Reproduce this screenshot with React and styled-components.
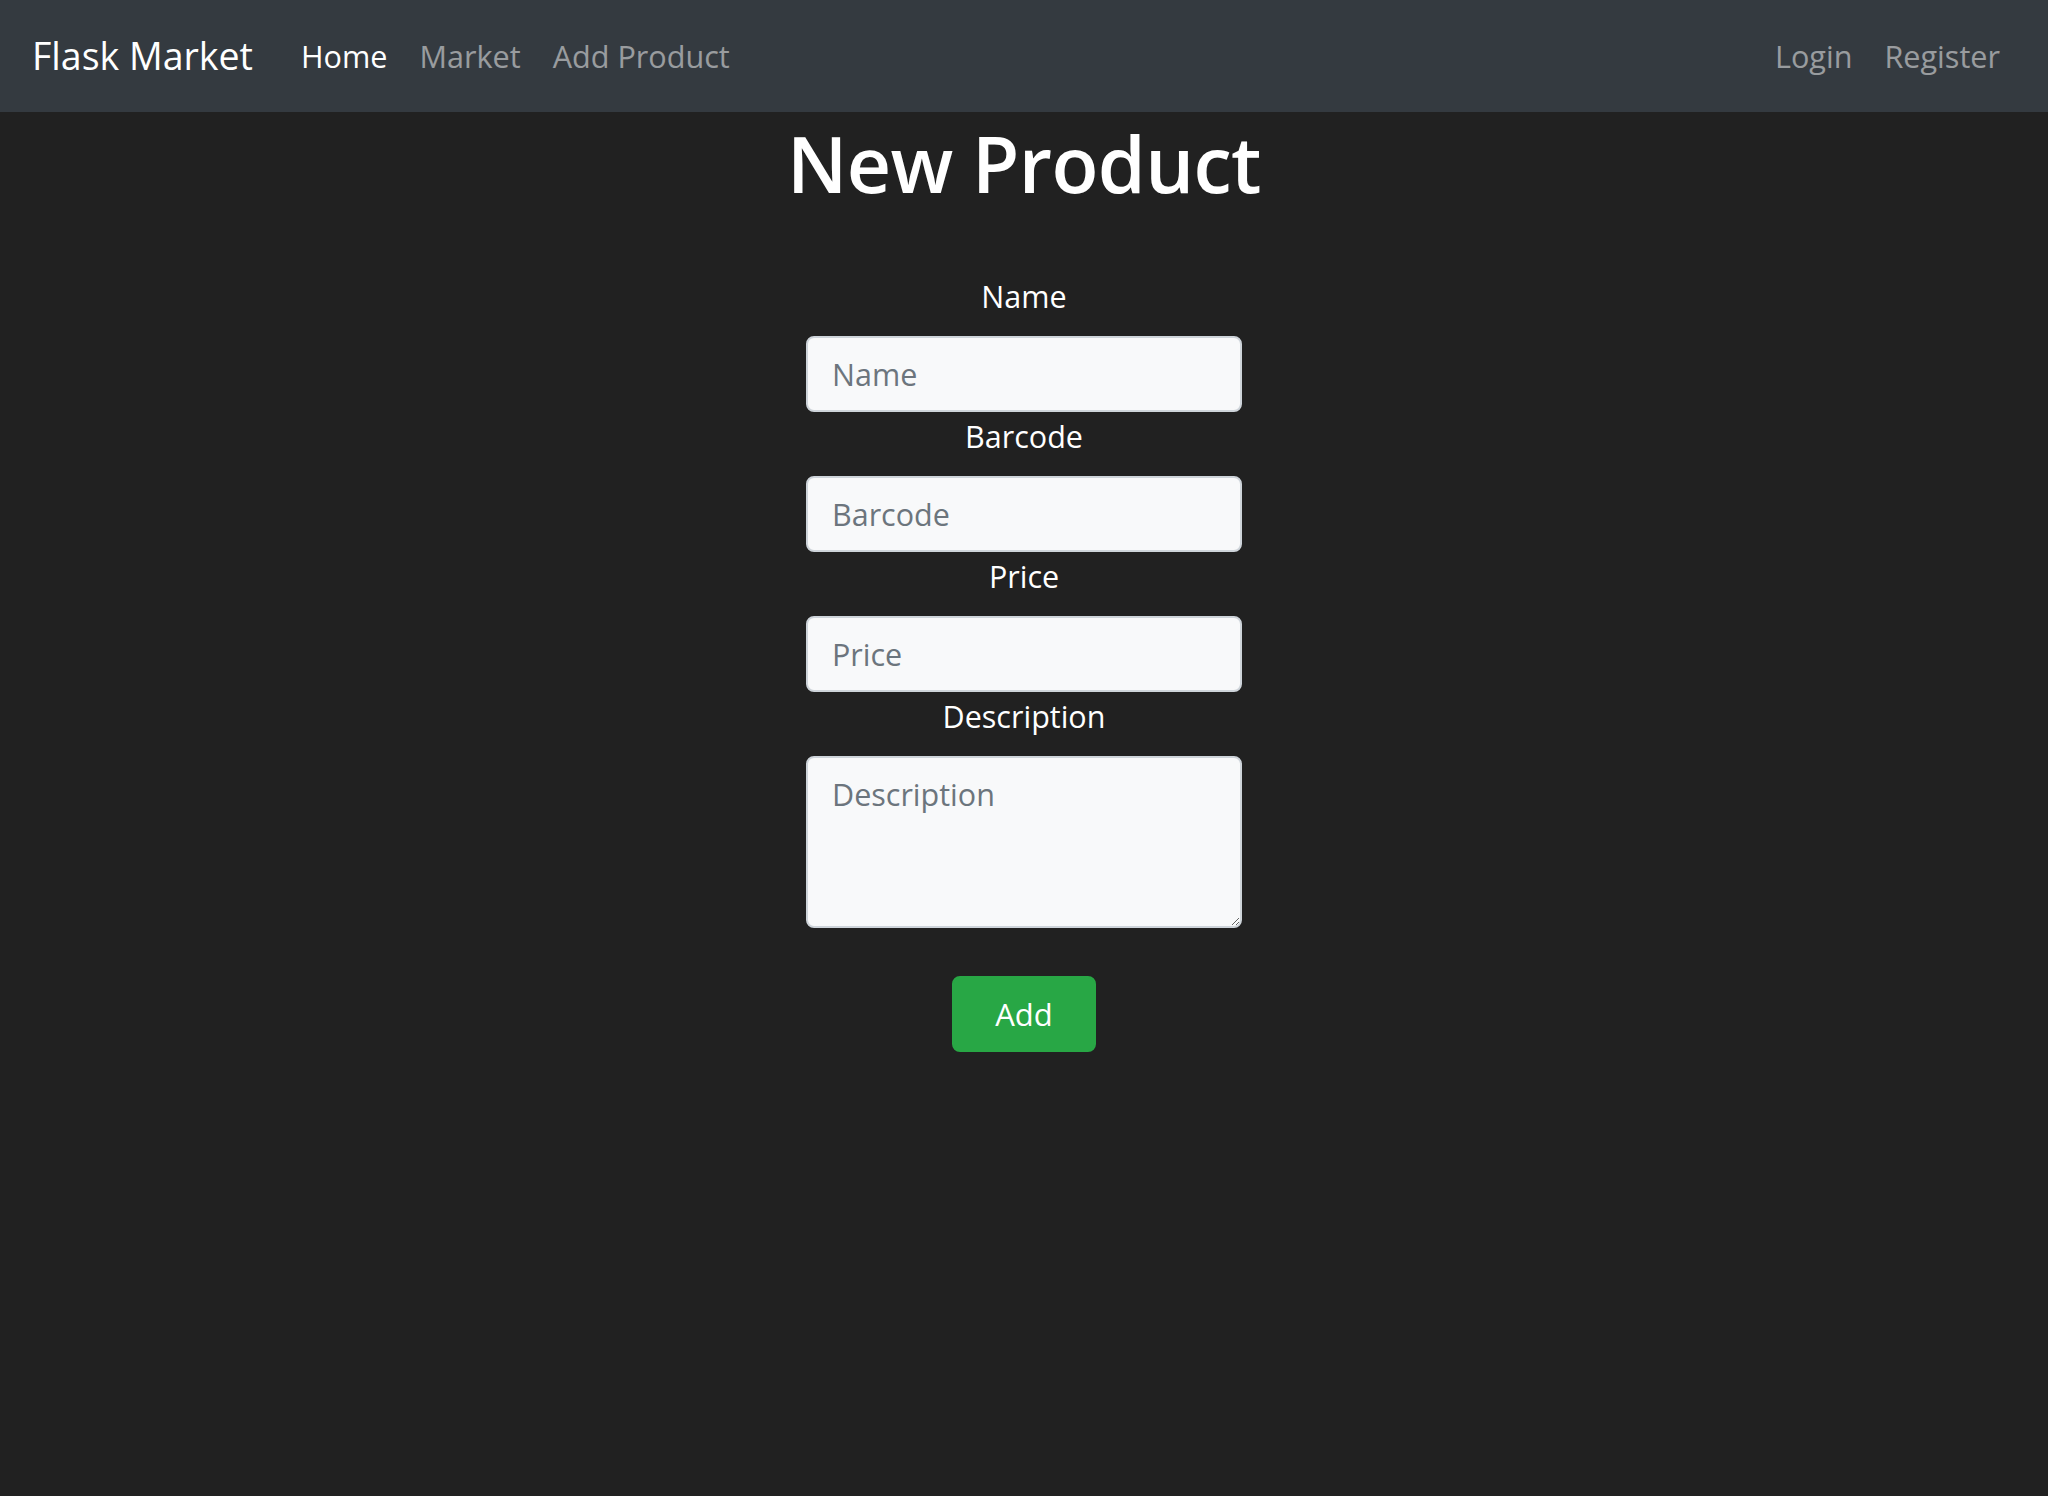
import React from 'react'
import styled, { createGlobalStyle } from 'styled-components'

const GlobalStyle = createGlobalStyle`
  * { box-sizing: border-box; }
  html, body {
    margin: 0;
    background: #212121;
    color: #fff;
    font-family: 'Open Sans', 'Noto Sans', sans-serif;
    font-size: 32px;
    line-height: 1.5;
  }
`

const Navbar = styled.nav`
  display: flex;
  align-items: center;
  background-color: #343a40;
  padding: 16px 32px;
`

const Brand = styled.a`
  color: #fff;
  font-size: 37.5px;
  line-height: 60px;
  padding: 10px 0;
  margin-right: 32px;
  text-decoration: none;
  white-space: nowrap;
`

const NavList = styled.ul`
  display: flex;
  list-style: none;
  margin: 0;
  padding: 0;
  margin-left: ${(p) => (p.$right ? 'auto' : '0')};
`

const NavLink = styled.a`
  display: block;
  padding: 16px 16px;
  font-size: 30.6px;
  line-height: 48px;
  color: ${(p) => (p.$active ? '#fff' : 'rgba(255, 255, 255, 0.5)')};
  text-decoration: none;
`

const Main = styled.main`
  display: flex;
  flex-direction: column;
  align-items: center;
`

const Title = styled.h1`
  margin: 4px 0 60px;
  font-size: 77px;
  font-weight: 600;
  line-height: 96px;
  letter-spacing: -0.6px;
`

const Form = styled.form`
  width: 436px;
  display: flex;
  flex-direction: column;
  align-items: center;
`

const Label = styled.label`
  font-size: 30.5px;
  line-height: 48px;
  margin-bottom: 16px;
`

const fieldStyles = `
  display: block;
  width: 100%;
  padding: 12px 24px;
  font-family: 'Open Sans', 'Noto Sans', sans-serif;
  font-size: 30.5px;
  line-height: 48px;
  color: #495057;
  background-color: #f8f9fa;
  border: 2px solid #ced4da;
  border-radius: 8px;
  outline: none;
  &::placeholder { color: #6c757d; }
`

const Input = styled.input`
  ${fieldStyles}
  height: 76px;
`

const TextArea = styled.textarea`
  ${fieldStyles}
  height: 172px;
  margin-bottom: 48px;
`

const SubmitButton = styled.button`
  font-family: 'Open Sans', 'Noto Sans', sans-serif;
  font-size: 31px;
  line-height: 48px;
  padding: 12px 24px;
  width: 144px;
  color: #fff;
  background-color: #28a745;
  border: 2px solid #28a745;
  border-radius: 8px;
  cursor: pointer;
`

const App = () => (
  <>
    <GlobalStyle />
    <Navbar>
      <Brand href="#">Flask Market</Brand>
      <NavList>
        <li><NavLink href="#" $active>Home</NavLink></li>
        <li><NavLink href="#">Market</NavLink></li>
        <li><NavLink href="#">Add Product</NavLink></li>
      </NavList>
      <NavList $right>
        <li><NavLink href="#">Login</NavLink></li>
        <li><NavLink href="#">Register</NavLink></li>
      </NavList>
    </Navbar>
    <Main>
      <Title>New Product</Title>
      <Form onSubmit={(e) => e.preventDefault()}>
        <Label htmlFor="name">Name</Label>
        <Input id="name" placeholder="Name" />
        <Label htmlFor="barcode">Barcode</Label>
        <Input id="barcode" placeholder="Barcode" />
        <Label htmlFor="price">Price</Label>
        <Input id="price" placeholder="Price" />
        <Label htmlFor="description">Description</Label>
        <TextArea id="description" placeholder="Description" rows={3} />
        <SubmitButton type="submit">Add</SubmitButton>
      </Form>
    </Main>
  </>
)

export default App
